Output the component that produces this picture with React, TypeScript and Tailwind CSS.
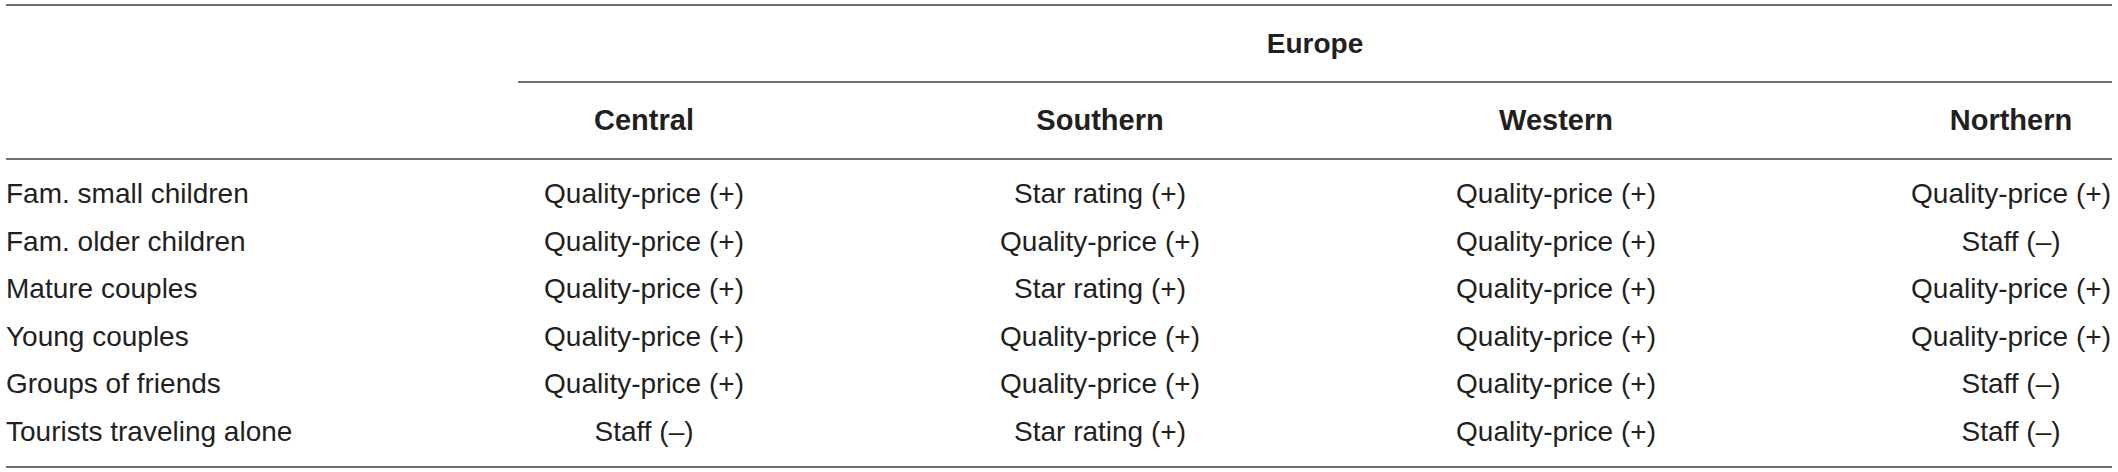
const regions = ["Central", "Southern", "Western", "Northern"];

const rows = [
  { group: "Fam. small children", cells: ["Quality-price (+)", "Star rating (+)", "Quality-price (+)", "Quality-price (+)"] },
  { group: "Fam. older children", cells: ["Quality-price (+)", "Quality-price (+)", "Quality-price (+)", "Staff (–)"] },
  { group: "Mature couples", cells: ["Quality-price (+)", "Star rating (+)", "Quality-price (+)", "Quality-price (+)"] },
  { group: "Young couples", cells: ["Quality-price (+)", "Quality-price (+)", "Quality-price (+)", "Quality-price (+)"] },
  { group: "Groups of friends", cells: ["Quality-price (+)", "Quality-price (+)", "Quality-price (+)", "Staff (–)"] },
  { group: "Tourists traveling alone", cells: ["Staff (–)", "Star rating (+)", "Quality-price (+)", "Staff (–)"] },
];

// label column, then four data columns; the last one is narrower and its text sits flush to the rule end
const cols = "grid grid-cols-[410px_456px_456px_456px_328px]";

function Cell({ text, last }: { text: string; last?: boolean }) {
  return (
    <div className={`text-center whitespace-nowrap ${last ? "pl-[126px]" : ""}`}>
      {text}
    </div>
  );
}

export default function App() {
  return (
    <div className="w-[2118px] h-[472px] bg-white pt-[4px] text-[#231f20] font-['Liberation_Sans',Arial,sans-serif]">
      <div className="ml-[6px] w-[2106px] border-t-2 border-b-2 border-[#6f6f6f]">
        {/* Europe spanning header */}
        <div className={cols}>
          <div />
          <div className="col-span-4 pl-[102px]">
            <div className="h-[77px] border-b-2 border-[#6f6f6f] flex items-center justify-center text-[28px] font-bold">
              Europe
            </div>
          </div>
        </div>

        {/* Region headers */}
        <div className={`${cols} h-[77px] items-center border-b-2 border-[#6f6f6f] text-[29px] font-bold`}>
          <div />
          {regions.map((r, i) => (
            <Cell key={r} text={r} last={i === 3} />
          ))}
        </div>

        {/* Body */}
        <div className="pt-[10px] pb-[10px] text-[28px] leading-[47.6px]">
          {rows.map((row) => (
            <div key={row.group} className={cols}>
              <div className="whitespace-nowrap">{row.group}</div>
              {row.cells.map((c, i) => (
                <Cell key={i} text={c} last={i === 3} />
              ))}
            </div>
          ))}
        </div>
      </div>
    </div>
  );
}
